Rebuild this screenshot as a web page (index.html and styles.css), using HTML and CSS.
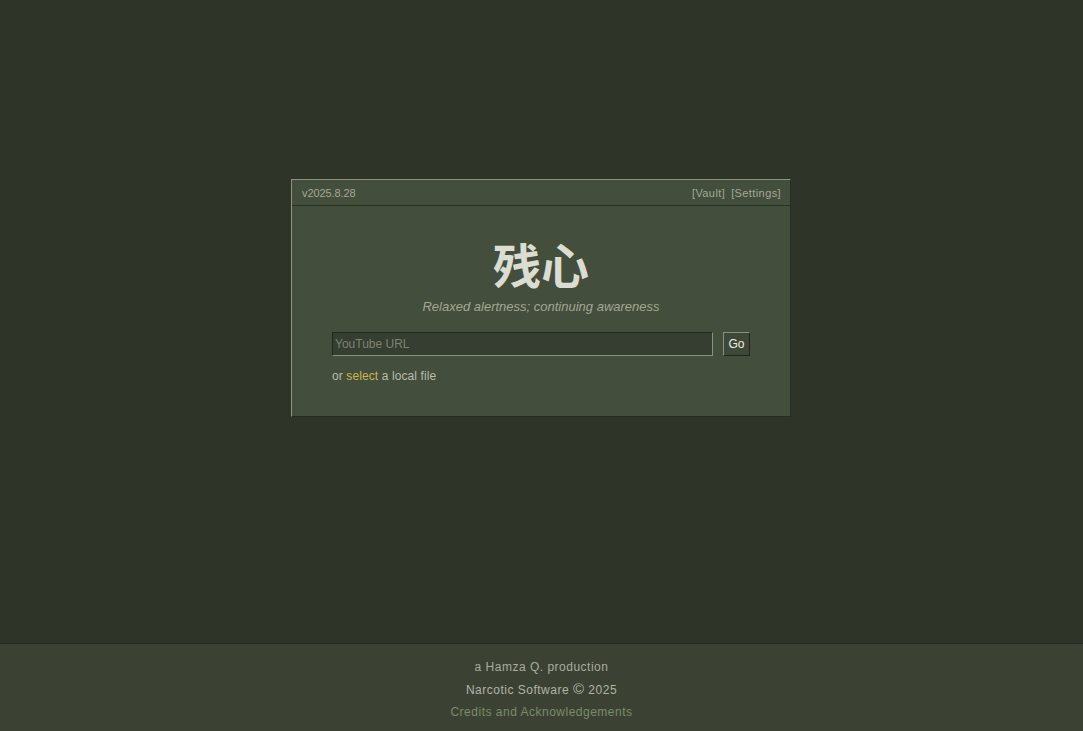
FILE: index.html
```html
<!DOCTYPE html>
<html>
<head>
<meta charset="utf-8">
<link rel="stylesheet" href="styles.css">
</head>
<body>
<div class="page">
  <main class="main">
    <section class="panel">
      <header class="panel-head">
        <span class="version">v2025.8.28</span>
        <nav class="links"><span>[Vault]</span><span>[Settings]</span></nav>
      </header>
      <div class="panel-body">
        <h1 class="title">残心</h1>
        <p class="subtitle">Relaxed alertness; continuing awareness</p>
        <div class="url-row">
          <input class="url-input" type="text" placeholder="YouTube URL">
          <button class="go-btn">Go</button>
        </div>
        <p class="local">or <span class="select">select</span> a local file</p>
      </div>
    </section>
  </main>
  <footer class="footer">
    <div class="f1">a Hamza Q. production</div>
    <div class="f2">Narcotic Software <span class="copy">©</span> 2025</div>
    <div class="f3">Credits and Acknowledgements</div>
  </footer>
</div>
</body>
</html>
```

FILE: styles.css
```css
* { box-sizing: border-box; }
html, body { margin: 0; padding: 0; }
body {
  background: #2f3429;
  font-family: "Liberation Sans", Arial, sans-serif;
  font-size: 12px;
  color: #b9bcae;
}
.page {
  height: 731px;
  display: flex;
  flex-direction: column;
}
.main {
  flex: 1;
  display: flex;
  justify-content: center;
  align-items: flex-start;
  padding-top: 179px;
  padding-right: 1px;
}
.panel {
  width: 500px;
  background: #444e3c;
  border-top: 1px solid #8a937e;
  border-left: 1px solid #8a937e;
  border-right: 1px solid #272c22;
  border-bottom: 1px solid #272c22;
}
.panel-head {
  height: 26px;
  display: flex;
  justify-content: space-between;
  align-items: center;
  padding: 0 9px 0 10px;
  border-bottom: 1px solid #2a3024;
  font-size: 11px;
  color: #a3a995;
}
.version { letter-spacing: -0.1px; }
.links { display: flex; gap: 6px; letter-spacing: 0.4px; }
.panel-body {
  padding: 28px 40px 32px;
  display: flex;
  flex-direction: column;
}
.title {
  margin: 0;
  text-align: center;
  font-family: "Noto Sans CJK SC", "Noto Sans CJK JP", sans-serif;
  font-weight: 700;
  font-size: 48px;
  line-height: 58px;
  color: #dcddd2;
}
.subtitle {
  margin: 7px 0 0;
  text-align: center;
  font-style: italic;
  font-size: 13px;
  line-height: 16px;
  color: #a2a893;
}
.url-row {
  margin-top: 17px;
  display: flex;
  gap: 10px;
}
.url-input {
  width: 381px;
  height: 24px;
  margin: 0;
  padding: 0 2px;
  background: #363d31;
  border-top: 1px solid #22271d;
  border-left: 1px solid #22271d;
  border-right: 1px solid #8a927d;
  border-bottom: 1px solid #8a927d;
  font-family: "Liberation Sans", Arial, sans-serif;
  font-size: 12px;
  color: #dcddd2;
  outline: none;
}
.url-input::placeholder { color: #7c8471; }
.go-btn {
  width: 27px;
  height: 24px;
  margin: 0;
  padding: 0;
  background: #3f4838;
  border-top: 1px solid #8a927d;
  border-left: 1px solid #8a927d;
  border-right: 1px solid #22271d;
  border-bottom: 1px solid #22271d;
  font-family: "Liberation Sans", Arial, sans-serif;
  font-size: 12px;
  color: #eceee4;
}
.local {
  margin: 12px 0 0;
  line-height: 16px;
  color: #b9bcae;
  font-size: 12px;
  letter-spacing: 0.1px;
}
.select { color: #c8b74c; }
.footer {
  height: 88px;
  background: #3b4234;
  border-top: 1px solid #23281f;
  padding-top: 12px;
  text-align: center;
  font-size: 12px;
  line-height: 22.5px;
  letter-spacing: 0.5px;
}
.copy { font-size: 15px; line-height: 0; }
.f1 { color: #a9ad9c; }
.f2 { color: #b1b4a5; }
.f3 { color: #7d8a6c; }
```
